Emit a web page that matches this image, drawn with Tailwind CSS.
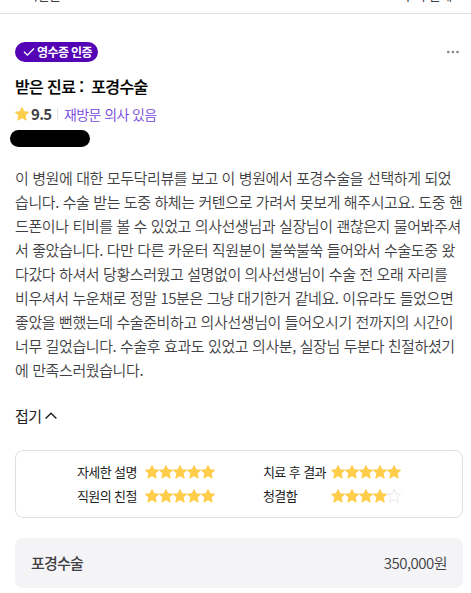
<!DOCTYPE html>
<html lang="ko">
<head>
<meta charset="utf-8">
<title>리뷰</title>
<script src="https://cdn.jsdelivr.net/npm/@tailwindcss/browser@4"></script>
</head>
<body class="h-[593px] overflow-hidden bg-white font-['Noto_Sans_CJK_KR',sans-serif] text-[#3f3f44]">
<svg class="hidden"><symbol id="star" viewBox="0 0 14 14"><path d="M7 .5 8.9 4.7 13.6 5.2 10.1 8.3 11.2 13.2 7 10.7 2.8 13.2 3.9 8.3.4 5.2 5.1 4.7Z" stroke-linejoin="round"/></symbol></svg>
<header class="flex h-[14px] items-end justify-between overflow-hidden border-b border-[#dedfe1] pr-[19px] pb-[9px] pl-[26px] text-[13px] leading-[18px] tracking-[-0.3px]">
  <span>시간은</span><span>후기 날세</span>
</header>
<main class="px-[15px] pr-2 pt-7">
  <div class="flex h-5 items-center justify-between">
    <span class="flex h-5 w-[83px] items-center rounded-full bg-[#5404b4] pl-2 text-[12px] font-bold tracking-[-0.6px] whitespace-nowrap text-white">
      <svg class="mr-[2px] h-3 w-3 shrink-0" viewBox="0 0 12 12" fill="none" stroke="currentColor" stroke-width="1.3"><path d="M1 5.8 4.4 9.2 11 2.5"/></svg>영수증 인증</span>
    <svg class="mr-1 h-3 w-3" viewBox="0 0 12 12" fill="#858585"><circle cx="1.3" cy="6" r="1.3"/><circle cx="5.9" cy="6" r="1.3"/><circle cx="10.5" cy="6" r="1.3"/></svg>
  </div>
  <h1 class="mt-3 h-6 text-[16px] leading-6 font-medium tracking-[-0.6px] whitespace-pre text-black [-webkit-text-stroke:0.2px_black]">받은 진료 :  포경수술</h1>
  <div class="mt-1 flex h-6 items-center">
    <svg class="h-[14px] w-[14px] fill-[#ffcd4a] stroke-[#ffcd4a]"><use href="#star"/></svg>
    <b class="ml-[2px] w-5 text-[15px] leading-6 font-bold tracking-[-0.7px]">9.5</b>
    <i class="ml-[6px] h-3 w-px bg-[#e2e2e5]"></i>
    <span class="ml-[6px] text-[14px] leading-6 font-[350] tracking-[-0.6px] text-[#7445dd]">재방문 의사 있음</span>
  </div>
  <div class="mt-1 -ml-[5px] h-[17px] w-[80px] rounded-full bg-black"></div>
  <p class="mt-[19px] text-[15px] leading-6 font-[350] tracking-[-0.4px] whitespace-nowrap">이 병원에 대한 모두닥리뷰를 보고 이 병원에서 포경수술을 선택하게 되었<br>습니다. 수술 받는 도중 하체는 커텐으로 가려서 못보게 해주시고요. 도중 핸<br>드폰이나 티비를 볼 수 있었고 의사선생님과 실장님이 괜찮은지 물어봐주셔<br>서 좋았습니다. 다만 다른 카운터 직원분이 불쑥불쑥 들어와서 수술도중 왔<br>다갔다 하셔서 당황스러웠고 설명없이 의사선생님이 수술 전 오래 자리를<br>비우셔서 누운채로 정말 15분은 그냥 대기한거 같네요. 이유라도 들었으면<br>좋았을 뻔했는데 수술준비하고 의사선생님이 들어오시기 전까지의 시간이<br>너무 길었습니다. 수술후 효과도 있었고 의사분, 실장님 두분다 친절하셨기<br>에 만족스러웠습니다.</p>
  <div class="mt-[22px] flex h-6 items-center text-[15px] leading-6 tracking-[-0.6px] text-[#222]">접기<svg class="ml-1 h-3 w-3" viewBox="0 0 12 12" fill="none" stroke="currentColor" stroke-width="1.5"><path d="M.6 8.5 6 3.3 11.4 8.5"/></svg></div>
  <section class="mt-[22px] flex h-[68px] flex-col justify-center rounded-lg border border-[#dedfe1] pl-[61px] text-[13px] leading-6 tracking-[-0.6px] whitespace-nowrap text-[#222]">
    <div class="flex items-center"><span class="w-[68px]">자세한 설명</span><span class="flex w-[118px] fill-[#ffcd4a] stroke-[#ffcd4a]"><svg class="h-[14px] w-[14px]"><use href="#star"/></svg><svg class="h-[14px] w-[14px]"><use href="#star"/></svg><svg class="h-[14px] w-[14px]"><use href="#star"/></svg><svg class="h-[14px] w-[14px]"><use href="#star"/></svg><svg class="h-[14px] w-[14px]"><use href="#star"/></svg></span><span class="w-[68px]">치료 후 결과</span><span class="flex fill-[#ffcd4a] stroke-[#ffcd4a]"><svg class="h-[14px] w-[14px]"><use href="#star"/></svg><svg class="h-[14px] w-[14px]"><use href="#star"/></svg><svg class="h-[14px] w-[14px]"><use href="#star"/></svg><svg class="h-[14px] w-[14px]"><use href="#star"/></svg><svg class="h-[14px] w-[14px]"><use href="#star"/></svg></span></div>
    <div class="flex items-center"><span class="w-[68px]">직원의 친절</span><span class="flex w-[118px] fill-[#ffcd4a] stroke-[#ffcd4a]"><svg class="h-[14px] w-[14px]"><use href="#star"/></svg><svg class="h-[14px] w-[14px]"><use href="#star"/></svg><svg class="h-[14px] w-[14px]"><use href="#star"/></svg><svg class="h-[14px] w-[14px]"><use href="#star"/></svg><svg class="h-[14px] w-[14px]"><use href="#star"/></svg></span><span class="w-[68px]">청결함</span><span class="flex fill-[#ffcd4a] stroke-[#ffcd4a]"><svg class="h-[14px] w-[14px]"><use href="#star"/></svg><svg class="h-[14px] w-[14px]"><use href="#star"/></svg><svg class="h-[14px] w-[14px]"><use href="#star"/></svg><svg class="h-[14px] w-[14px]"><use href="#star"/></svg><svg class="h-[14px] w-[14px] fill-white stroke-[#e8e8ec]"><use href="#star"/></svg></span></div>
  </section>
  <section class="mt-5 flex h-[50px] items-center justify-between rounded-lg bg-[#f4f4f7] px-4 text-[15px] tracking-[-0.5px]"><span class="font-medium tracking-[-0.8px]">포경수술</span><span class="font-[350]">350,000원</span></section>
</main>
</body>
</html>
